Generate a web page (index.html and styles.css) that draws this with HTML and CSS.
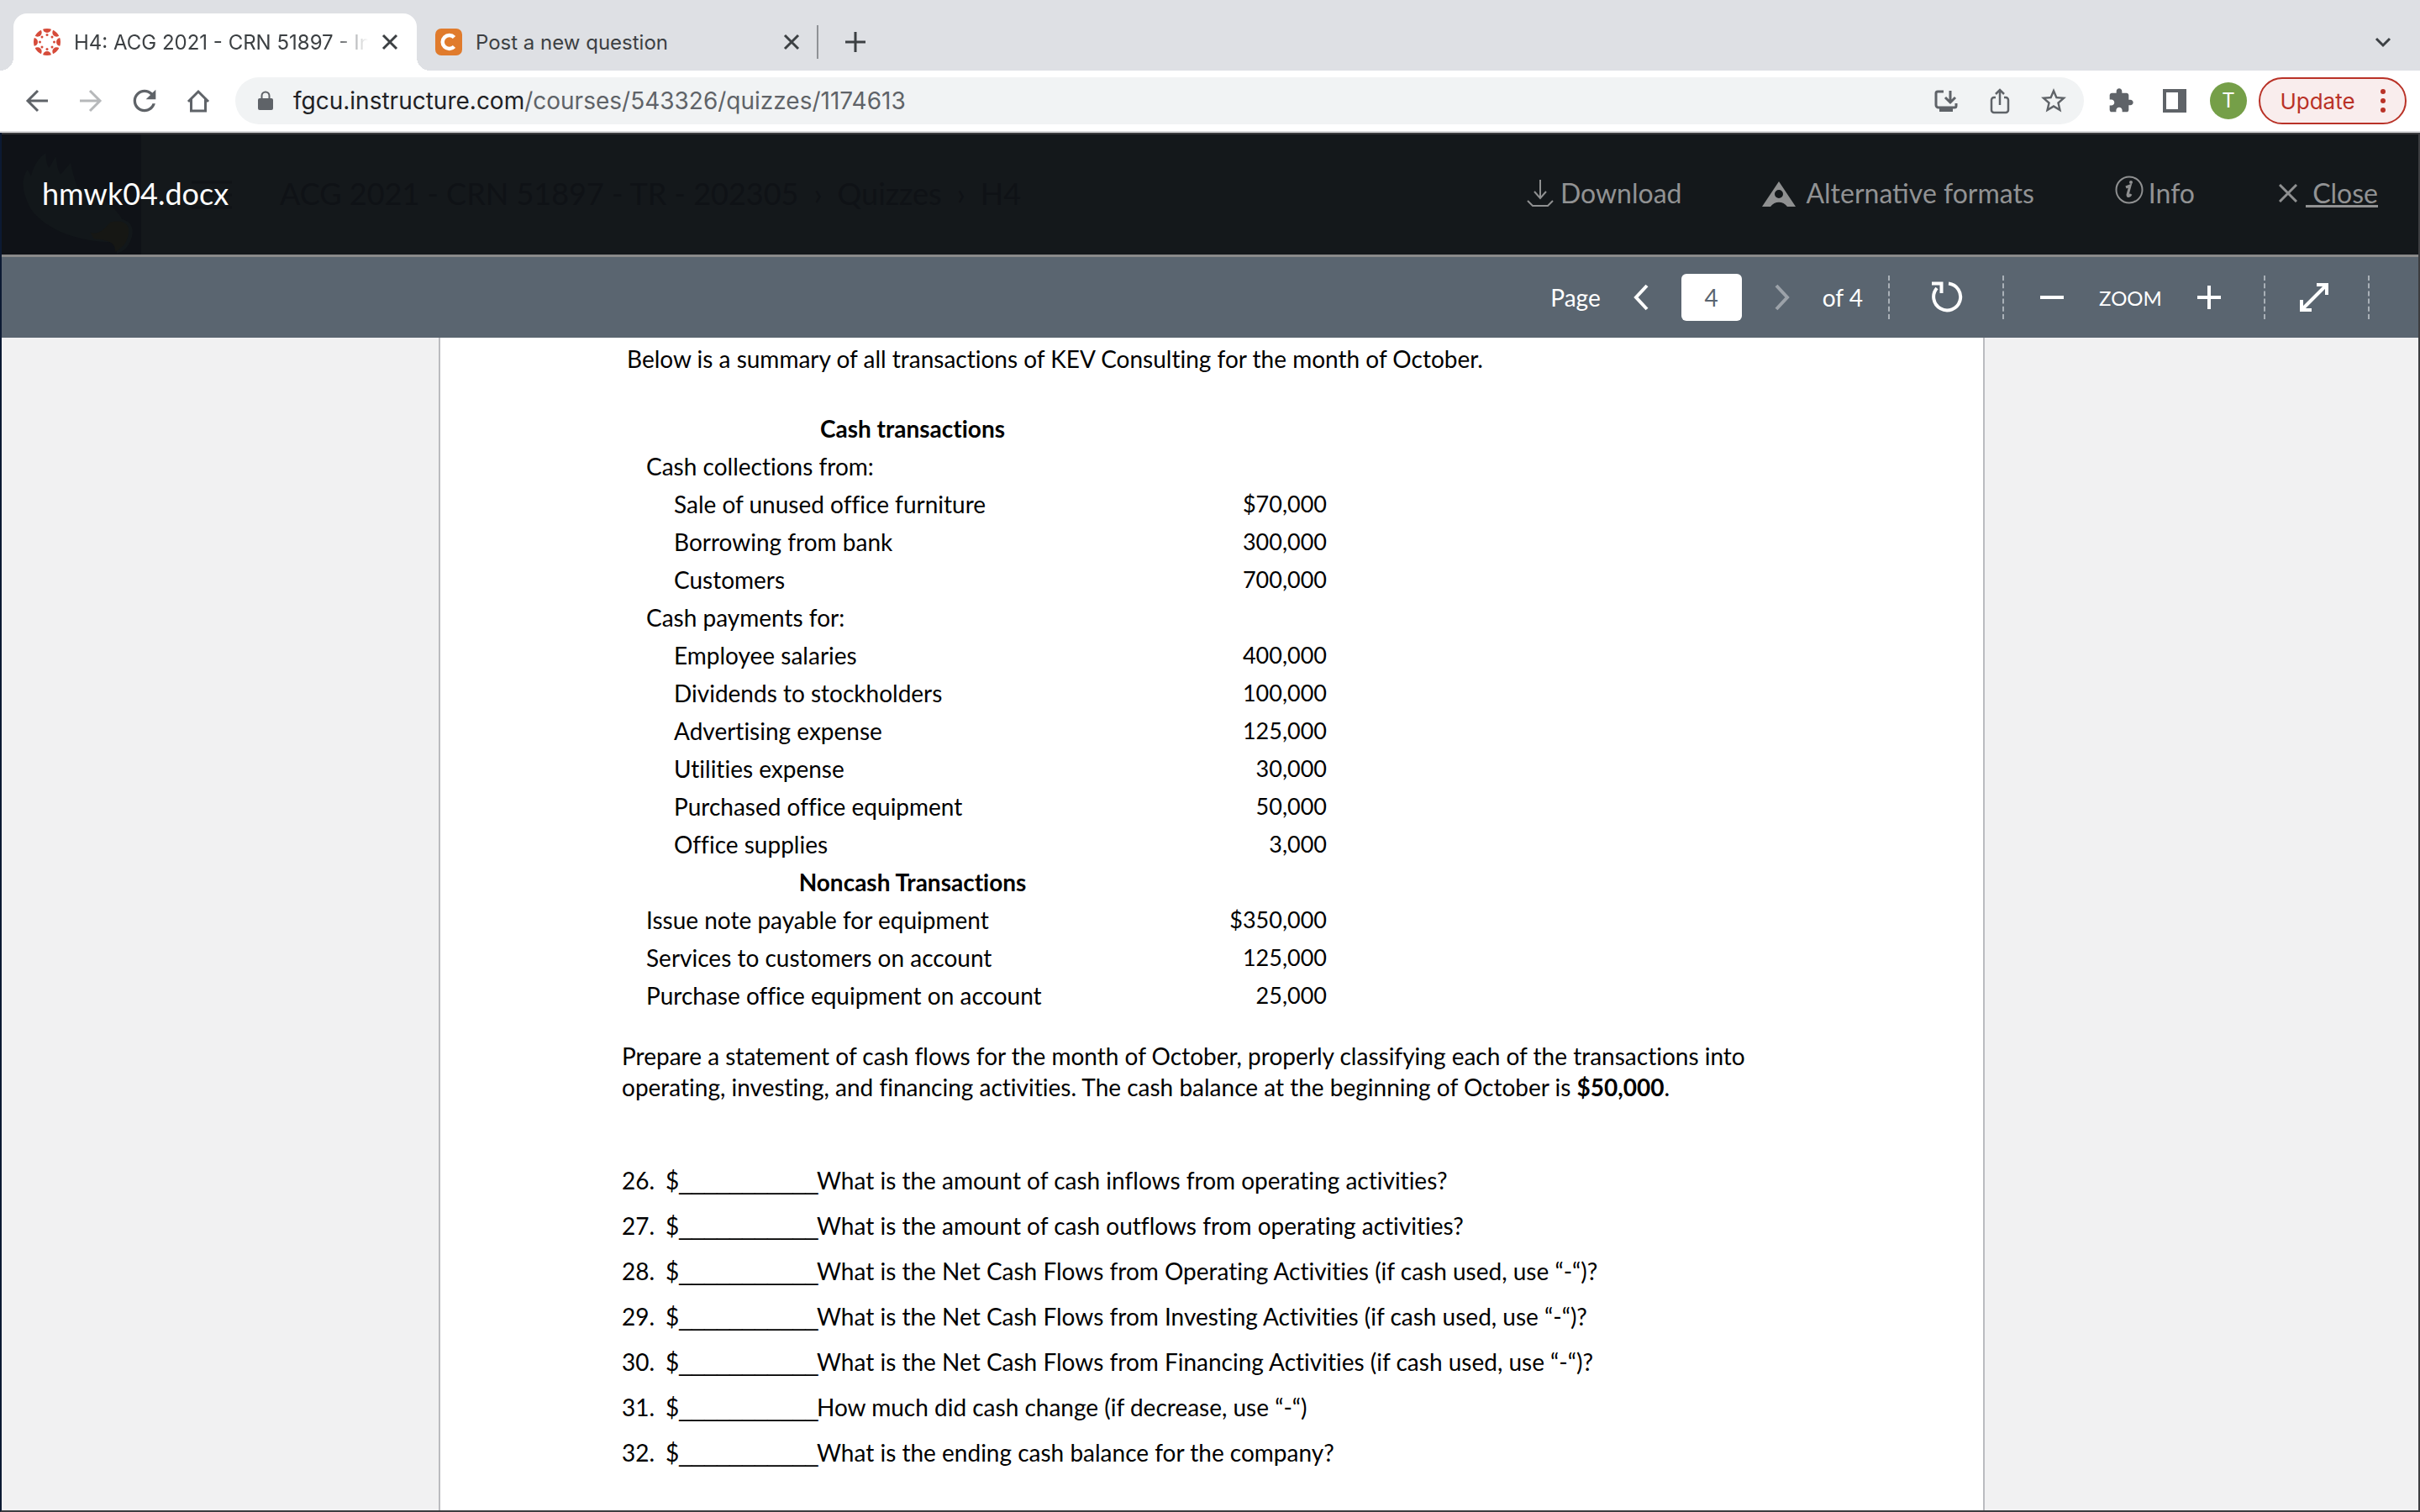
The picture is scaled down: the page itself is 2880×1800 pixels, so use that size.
FILE: index.html
```html
<!DOCTYPE html>
<html lang="en">
<head>
<meta charset="utf-8">
<title>H4: ACG 2021 - CRN 51897</title>
<link rel="stylesheet" href="styles.css">
</head>
<body>
<header class="browser">
  <div class="tabs">
    <div class="tab tab-active">
      <svg class="favicon" viewBox="0 0 32 32" fill="#d64b3a">
        <defs><clipPath id="disc"><circle cx="16" cy="16" r="16"/></clipPath>
        <g id="spoke"><circle cx="16" cy="0" r="5"/><circle cx="16" cy="7.500" r="1.500"/></g></defs>
        <g clip-path="url(#disc)">
          <use href="#spoke"/><use href="#spoke" transform="rotate(45 16 16)"/><use href="#spoke" transform="rotate(90 16 16)"/><use href="#spoke" transform="rotate(135 16 16)"/>
          <use href="#spoke" transform="rotate(180 16 16)"/><use href="#spoke" transform="rotate(225 16 16)"/><use href="#spoke" transform="rotate(270 16 16)"/><use href="#spoke" transform="rotate(315 16 16)"/>
        </g>
      </svg>
      <span class="tab-title tab-fade">H4: ACG 2021 - CRN 51897 - In</span>
      <button class="tab-close" aria-label="Close tab"><svg viewBox="0 0 20 20"><path d="M2 2l16 16M18 2L2 18"/></svg></button>
    </div>
    <div class="tab">
      <svg class="favicon" viewBox="0 0 32 32"><rect width="32" height="32" rx="7" fill="#e07b2c"/><path d="M22.500 10.500a8 8 0 1 0 0 11" fill="none" stroke="#fff" stroke-width="4.500"/></svg>
      <span class="tab-title">Post a new question</span>
      <button class="tab-close" aria-label="Close tab"><svg viewBox="0 0 20 20"><path d="M2 2l16 16M18 2L2 18"/></svg></button>
    </div>
    <span class="tab-divider"></span>
    <button class="tab-new" aria-label="New tab"><svg viewBox="0 0 24 24"><path d="M12 0v24M0 12h24"/></svg></button>
    <button class="tab-search" aria-label="Search tabs"><svg viewBox="0 0 20 14"><path d="M2 3l8 8 8-8"/></svg></button>
  </div>
  <div class="toolbar">
    <button class="tool" aria-label="Back"><svg class="i32 line" viewBox="0 0 32 32"><path d="M29 16H5M17 4L5 16l12 12"/></svg></button>
    <button class="tool tool-off" aria-label="Forward"><svg class="i32 line" viewBox="0 0 32 32"><path d="M3 16h24M15 4l12 12-12 12"/></svg></button>
    <button class="tool" aria-label="Reload"><svg class="i40" viewBox="0 0 24 24"><path d="M17.65 6.35C16.2 4.9 14.21 4 12 4c-4.42 0-7.99 3.58-7.99 8s3.57 8 7.99 8c3.73 0 6.84-2.55 7.73-6h-2.08c-.82 2.33-3.040 4-5.65 4-3.310 0-6-2.690-6-6s2.690-6 6-6c1.66 0 3.140.69 4.220 1.78L13 11h7V4l-2.350 2.350z"/></svg></button>
    <button class="tool" aria-label="Home"><svg class="i32 line" viewBox="0 0 32 32"><path d="M4 17L16 5l12 12M7.500 14v14h17V14"/></svg></button>
    <div class="omnibox">
      <svg class="lock" viewBox="0 0 18 24"><path d="M2 9h14a2 2 0 0 1 2 2v10a2 2 0 0 1-2 2H2a2 2 0 0 1-2-2V11a2 2 0 0 1 2-2z"/><path d="M4.500 10V6a4.500 4.500 0 0 1 9 0v4" fill="none" stroke="#5f6368" stroke-width="2"/></svg>
      <div class="url" role="textbox" contenteditable="true" spellcheck="false" aria-label="Address">fgcu.instructure.com<span class="url-path">/courses/543326/quizzes/1174613</span></div>
      <button class="tool" aria-label="Install"><svg class="i32 line" viewBox="0 0 32 32"><path d="M13 5H6a2 2 0 0 0-2 2v14a3 3 0 0 0 3 3h19a2 2 0 0 0 2-2v-3M21 4v13M15 12l6 6 6-6"/><path d="M8 25h16v4H8z" fill="#5f6368" stroke="none"/></svg></button>
      <button class="tool" aria-label="Share"><svg class="i32 line" viewBox="0 0 32 32"><path d="M11 12H9a3 3 0 0 0-3 3v12a3 3 0 0 0 3 3h14a3 3 0 0 0 3-3V15a3 3 0 0 0-3-3h-2M16 21V5M11 8l5-5 5 5" stroke-width="2.500"/></svg></button>
      <button class="tool" aria-label="Bookmark"><svg class="i36" viewBox="0 0 24 24"><path d="M22 9.240l-7.190-.62L12 2 9.190 8.630 2 9.240l5.460 4.730L5.820 21 12 17.270 18.180 21l-1.630-7.030L22 9.240zM12 15.400l-3.760 2.270 1-4.280-3.320-2.880 4.380-.38L12 6.100l1.710 4.040 4.380.38-3.320 2.880 1 4.280L12 15.400z"/></svg></button>
    </div>
    <button class="tool" aria-label="Extensions"><svg class="i32" viewBox="0 0 24 24"><path d="M20.500 11H19V7c0-1.100-.9-2-2-2h-4V3.500C13 2.120 11.880 1 10.500 1S8 2.120 8 3.500V5H4c-1.100 0-1.990.9-1.990 2v3.800H3.500c1.490 0 2.700 1.210 2.700 2.700s-1.210 2.700-2.700 2.700H2V20c0 1.100.9 2 2 2h3.800v-1.500c0-1.490 1.210-2.700 2.700-2.700 1.490 0 2.700 1.210 2.700 2.700V22H17c1.100 0 2-.9 2-2v-4h1.500c1.380 0 2.500-1.120 2.500-2.500S21.880 11 20.500 11z"/></svg></button>
    <button class="tool" aria-label="Side panel"><svg class="i32" viewBox="0 0 32 32"><path d="M2 2h28v28H2zM6 6v20h14V6z" fill-rule="evenodd"/></svg></button>
    <button class="tool" aria-label="Profile"><span class="avatar">T</span></button>
    <button class="update">Update<svg viewBox="0 0 6 30"><circle cx="3" cy="4" r="3"/><circle cx="3" cy="15" r="3"/><circle cx="3" cy="26" r="3"/></svg></button>
  </div>
</header>

<main class="viewer">
  <div class="doc-header">
    <div class="underlay">
      <div class="crest"><svg viewBox="0 0 150 125"><path d="M22 70C8 45 12 30 18 22l4 8C26 14 34 6 40 2c0 10 2 16 4 18l8-14c2 12 2 16 6 22l12-14c2 12 6 22 8 30 22 8 44 20 54 38 14 4 14 14 12 22-4 14-12 18-18 20-2-10 0-12-6-14C82 110 40 96 22 70z" fill="#12171a"/><path d="M118 86c18-4 24 4 22 14-2 12-8 16-16 22 0-10-4-14-26-16l-4-8c8 4 16-2 24-12z" fill="#161714"/></svg></div>
      <svg class="burger" viewBox="0 0 48 34"><path d="M0 2h48M0 17h48M0 32h48"/></svg>
      <nav class="crumbs" aria-label="Breadcrumb"><span>ACG 2021 - CRN 51897 - TR - 202305</span><span>›</span><span>Quizzes</span><span>›</span><span>H4</span></nav>
    </div>
    <h1 class="doc-name">hmwk04.docx</h1>
    <nav class="doc-actions">
      <a href="#download"><svg class="i32 thin" viewBox="0 0 32 32"><path d="M16 0v21M9 14l7 8 7-8M1 25l6 6h18l6-6"/></svg>Download</a>
      <a href="#formats" class="roomy"><svg class="i40" viewBox="0 0 40 32"><path d="M20 2l20 30H30c-5-7-15-7-20 0H0zM20 12a5 5 0 1 0 0 10 5 5 0 0 0 0-10z" fill="#8f9091" fill-rule="evenodd"/></svg>Alternative formats</a>
      <a href="#info" class="info"><svg class="i34 thin info-icon" viewBox="0 0 34 34"><circle cx="17" cy="17" r="15.500"/><path d="M13 14l5-2-3 11c0 3 3 1 4-1" stroke-width="3"/><circle cx="19" cy="8" r="2" fill="#8f9091" stroke="none"/></svg>Info</a>
      <a href="#close" class="close"><svg class="i22 thin" viewBox="0 0 22 22"><path d="M1 1l20 20M21 1L1 21" stroke-width="3"/></svg><span>&nbsp;Close</span></a>
    </nav>
  </div>
  <div class="doc-tools">
    <label class="page-label" for="page">Page</label>
    <button class="arrow" aria-label="Previous page"><svg viewBox="0 0 20 32"><path d="M17 2L4 16l13 14"/></svg></button>
    <input class="page-input" id="page" type="text" value="4">
    <button class="arrow arrow-off" aria-label="Next page"><svg viewBox="0 0 20 32"><path d="M3 2l13 14L3 30"/></svg></button>
    <span class="page-total">of 4</span>
    <button class="cell cell-rotate" aria-label="Rotate"><svg class="i40 bold" viewBox="0 0 40 40"><path d="M23 3.500A16 16 0 1 1 9 9"/><path d="M3 3.500h11.500V15" fill="none"/></svg></button>
    <div class="cell cell-zoom">
      <button aria-label="Zoom out"><svg class="i30 bold" viewBox="0 0 30 30"><path d="M1 15h28"/></svg></button>
      <span>ZOOM</span>
      <button aria-label="Zoom in"><svg class="i30 bold" viewBox="0 0 30 30"><path d="M1 15h28M15 1v28"/></svg></button>
    </div>
    <button class="cell cell-full" aria-label="Full screen"><svg class="i36 bold" viewBox="0 0 36 36"><path d="M4 32L32 4M21 3h12v12M3 21v12h12"/></svg></button>
    <span class="cell cell-end"></span>
  </div>
  <div class="canvas">
    <article class="sheet">
      <p class="intro">Below is a summary of all transactions of KEV Consulting for the month of October.</p>
      <table class="ledger">
        <tr><th scope="colgroup">Cash transactions</th><td></td></tr>
        <tr><td>Cash collections from:</td><td></td></tr>
        <tr class="sub"><td>Sale of unused office furniture</td><td>$70,000</td></tr>
        <tr class="sub"><td>Borrowing from bank</td><td>300,000</td></tr>
        <tr class="sub"><td>Customers</td><td>700,000</td></tr>
        <tr><td>Cash payments for:</td><td></td></tr>
        <tr class="sub"><td>Employee salaries</td><td>400,000</td></tr>
        <tr class="sub"><td>Dividends to stockholders</td><td>100,000</td></tr>
        <tr class="sub"><td>Advertising expense</td><td>125,000</td></tr>
        <tr class="sub"><td>Utilities expense</td><td>30,000</td></tr>
        <tr class="sub"><td>Purchased office equipment</td><td>50,000</td></tr>
        <tr class="sub"><td>Office supplies</td><td>3,000</td></tr>
        <tr><th scope="colgroup">Noncash Transactions</th><td></td></tr>
        <tr><td>Issue note payable for equipment</td><td>$350,000</td></tr>
        <tr><td>Services to customers on account</td><td>125,000</td></tr>
        <tr><td>Purchase office equipment on account</td><td>25,000</td></tr>
      </table>
      <p class="prompt">Prepare a statement of cash flows for the month of October, properly classifying each of the transactions into<br>operating, investing, and financing activities. The cash balance at the beginning of October is <b>$50,000</b>.</p>
      <div class="questions">
        <div class="question"><span>26.</span><span>$<span class="blank">___________</span></span><span>What is the amount of cash inflows from operating activities?</span></div>
        <div class="question"><span>27.</span><span>$<span class="blank">___________</span></span><span>What is the amount of cash outflows from operating activities?</span></div>
        <div class="question"><span>28.</span><span>$<span class="blank">___________</span></span><span>What is the Net Cash Flows from Operating Activities (if cash used, use “-“)?</span></div>
        <div class="question"><span>29.</span><span>$<span class="blank">___________</span></span><span>What is the Net Cash Flows from Investing Activities (if cash used, use “-“)?</span></div>
        <div class="question"><span>30.</span><span>$<span class="blank">___________</span></span><span>What is the Net Cash Flows from Financing Activities (if cash used, use “-“)?</span></div>
        <div class="question"><span>31.</span><span>$<span class="blank">___________</span></span><span>How much did cash change (if decrease, use “-“)</span></div>
        <div class="question"><span>32.</span><span>$<span class="blank">___________</span></span><span>What is the ending cash balance for the company?</span></div>
      </div>
    </article>
  </div>
</main>
</body>
</html>
```
FILE: styles.css
```css
* { box-sizing: border-box; }

body {
  display: flex;
  flex-direction: column;
  min-height: 100vh;
  margin: 0;
  background: #fff;
  font-family: Lato, sans-serif;
}

button {
  display: flex;
  align-items: center;
  justify-content: center;
  padding: 0;
  border: 0;
  background: none;
  font: inherit;
  color: inherit;
}

svg { display: block; flex: none; }
.i22 { width: 22px; height: 22px; }
.i30 { width: 30px; height: 30px; }
.i32 { width: 32px; height: 32px; }
.i34 { width: 34px; height: 34px; }
.i36 { width: 36px; height: 36px; }
.i40 { width: 40px; height: 40px; }

/* Browser chrome */
.browser {
  font-family: Inter, "Liberation Sans", sans-serif;
  color: #3c4043;
  border-bottom: 2px solid #d9d9db;
}

.tabs {
  display: flex;
  align-items: center;
  height: 84px;
  padding: 16px 34px 0 16px;
  background: #dee0e4;
}

.tab {
  display: flex;
  align-items: center;
  gap: 16px;
  width: 476px;
  height: 68px;
  padding: 0 20px 0 22px;
  font-size: 24px;
}

.tab-active {
  position: relative;
  width: 480px;
  padding: 0 22px 0 24px;
  border-radius: 16px 16px 0 0;
  background: #fff;
}

.tab-active::before,
.tab-active::after {
  content: "";
  position: absolute;
  bottom: 0;
  width: 16px;
  height: 16px;
}
.tab-active::before { left: -16px; background: radial-gradient(circle at 0 0, #dee0e4 16px, #fff 16px); }
.tab-active::after { right: -16px; background: radial-gradient(circle at 100% 0, #dee0e4 16px, #fff 16px); }

.favicon { width: 32px; height: 32px; }
.tab-title { flex: 1; overflow: hidden; white-space: nowrap; }
.tab-fade {
  -webkit-mask-image: linear-gradient(to right, #000 88%, transparent 100%);
  mask-image: linear-gradient(to right, #000 88%, transparent 100%);
}
.tab-close svg { width: 20px; height: 20px; fill: none; stroke: #3c4043; stroke-width: 3; }
.tab-divider { width: 2px; height: 40px; background: #8f9296; }
.tab-new { margin-left: 32px; }
.tab-new svg { width: 24px; height: 24px; stroke: #3c4043; stroke-width: 3; }
.tab-search { margin-left: auto; }
.tab-search svg { width: 20px; height: 14px; fill: none; stroke: #3c4043; stroke-width: 3; }

.toolbar {
  display: flex;
  align-items: center;
  height: 72px;
  padding: 0 16px 0 12px;
}

.tool { flex: none; width: 64px; height: 56px; }
.tool svg { fill: #5f6368; }
.tool .line { fill: none; stroke: #5f6368; stroke-width: 3; }
.tool-off { opacity: 0.45; }

.omnibox {
  display: flex;
  flex: 1;
  align-items: center;
  height: 56px;
  margin: 0 12px;
  padding: 0 4px 0 27px;
  border-radius: 28px;
  background: #f1f3f4;
}
.lock { width: 18px; height: 24px; margin-right: 24px; fill: #5f6368; }
.url { flex: 1; font-size: 28px; white-space: nowrap; color: #202124; }
.url-path { color: #5f6368; }

.avatar {
  width: 44px;
  border-radius: 50%;
  background: #759f48;
  color: #fff;
  font-size: 24px;
  line-height: 44px;
}

.update {
  gap: 30px;
  width: 176px;
  height: 56px;
  margin-left: 4px;
  border: 2px solid #b93227;
  border-radius: 28px;
  background: #f9eded;
  color: #b93227;
  font-size: 26px;
}
.update svg { width: 6px; height: 30px; fill: #b93227; }

/* Document viewer */
.viewer {
  display: flex;
  flex: 1;
  flex-direction: column;
  border: solid #3c3d40;
  border-width: 0 2px 2px;
  border-left-color: #0c1a33;
}

.doc-header {
  position: relative;
  display: flex;
  align-items: center;
  justify-content: space-between;
  height: 148px;
  padding: 0 48px 4px;
  border-top: 2px solid #3a3b3d;
  border-bottom: 3px solid #8a8a8a;
  background: #14181b;
  color: #919293;
}

.underlay {
  position: absolute;
  inset: 0;
  display: flex;
  align-items: center;
}
.crest { align-self: stretch; width: 166px; padding: 20px 0 0 12px; background: #0f1217; }
.crest svg { width: 150px; height: 123px; }
.burger { width: 48px; height: 34px; margin: 0 57px 0 60px; stroke: #101317; stroke-width: 3; }
.crumbs { display: flex; gap: 18px; padding-bottom: 4px; font-size: 36px; color: #0f1216; }

.doc-name { position: relative; margin: 0; font-size: 36px; font-weight: 400; color: #fff; }

.doc-actions { position: relative; display: flex; gap: 96px; }
.doc-actions a {
  display: flex;
  align-items: center;
  gap: 8px;
  color: inherit;
  font-size: 32px;
  text-decoration: none;
}
.doc-actions .roomy { gap: 12px; }
.doc-actions .info { gap: 6px; }
.doc-actions .close { gap: 10px; padding-left: 4px; }
.doc-actions .close span { text-decoration: underline; text-decoration-thickness: 3px; }
.info-icon { margin-bottom: 8px; }
.thin { fill: none; stroke: #8f9091; stroke-width: 2; }

.doc-tools {
  display: flex;
  align-items: center;
  justify-content: flex-end;
  height: 96px;
  background: #5a6570;
  color: #fff;
  font-size: 28px;
}
.arrow { width: 20px; margin: 0 38px; }
.arrow svg { width: 20px; height: 32px; fill: none; stroke: #fff; stroke-width: 4; }
.arrow-off { opacity: 0.4; }
.page-input {
  width: 72px;
  height: 56px;
  padding: 0;
  border: 0;
  border-radius: 6px;
  background: #fff;
  color: #5a6570;
  font: inherit;
  text-align: center;
}
.page-total { margin-right: 30px; }
.bold { fill: none; stroke: #fff; stroke-width: 4; }
.cell { height: 52px; border-left: 2px dashed #a9b0b7; }
.cell-rotate { width: 136px; }
.cell-zoom {
  display: flex;
  align-items: center;
  justify-content: space-between;
  width: 311px;
  padding: 0 50px 0 42px;
  font-size: 24px;
}
.cell-full { width: 124px; padding-right: 6px; }
.cell-end { width: 60px; }

.canvas { display: flex; flex: 1; justify-content: center; padding-left: 4px; background: #f1f1f2; }

.sheet {
  width: 1840px;
  padding: 6px 216px 0;
  border: solid #bbbcc0;
  border-width: 0 2px;
  background: #fff;
  color: #000;
  font-size: 28px;
  font-variant-ligatures: none;
}

.sheet p { margin: 0; }
.intro { padding-left: 6px; line-height: 38px; }

.ledger {
  width: 840px;
  margin: 41px 0 0 29px;
  border-collapse: collapse;
}
.ledger td, .ledger th { height: 45px; padding: 0; line-height: 44px; }
.ledger td { text-align: left; }
.ledger th { width: 634px; text-align: center; }
.ledger td + td, .ledger th + td { padding-right: 30px; font-size: 27px; text-align: right; }
.ledger .sub td:first-child { padding-left: 33px; }

.sheet .prompt { margin-top: 32px; line-height: 37px; white-space: nowrap; }

.questions { margin-top: 65px; }
.question {
  display: grid;
  grid-template-columns: 52px 180px 1fr;
  line-height: 54px;
  white-space: nowrap;
}
.blank { font-family: "Liberation Sans", sans-serif; font-size: 27px; line-height: 1; }
```
